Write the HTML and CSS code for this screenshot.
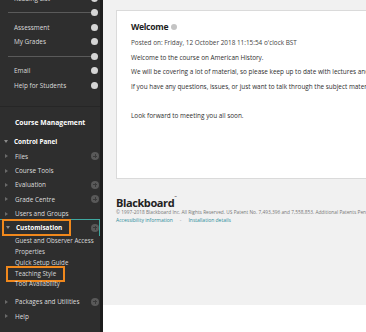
FILE: index.html
```html
<!DOCTYPE html>
<html>
<head lang="en">
    <meta charset="UTF-8">
    <title>Welcome</title>
    <link rel="stylesheet" href="styles.css">
</head>
<body>
<div id="page">
    <div id="side">
        <ul class="menu top">
            <li><span>Reading List</span><i class="dot"></i></li>
            <li class="line"><i class="dot"></i></li>
            <li><span>Assessment</span><i class="dot"></i></li>
            <li><span>My Grades</span><i class="dot"></i></li>
            <li class="line"><i class="dot"></i></li>
            <li><span>Email</span><i class="dot"></i></li>
            <li><span>Help for Students</span><i class="dot"></i></li>
        </ul>
        <div class="manage">
            <h3>Course Management</h3>
            <ul class="menu panel">
                <li class="head open"><b class="tri"></b><span>Control Panel</span></li>
                <li><b class="tri"></b><span>Files</span><i class="plus"></i></li>
                <li><b class="tri"></b><span>Course Tools</span></li>
                <li><b class="tri"></b><span>Evaluation</span><i class="plus"></i></li>
                <li><b class="tri"></b><span>Grade Centre</span><i class="plus"></i></li>
                <li><b class="tri"></b><span>Users and Groups</span></li>
                <li class="head open current"><em class="mark"><b class="tri"></b><span>Customisation</span></em><i class="plus"></i></li>
            </ul>
            <ul class="sub">
                <li>Guest and Observer Access</li>
                <li>Properties</li>
                <li>Quick Setup Guide</li>
                <li><em class="mark">Teaching Style</em></li>
                <li>Tool Availability</li>
            </ul>
            <ul class="menu panel">
                <li><b class="tri"></b><span>Packages and Utilities</span><i class="plus"></i></li>
                <li><b class="tri"></b><span>Help</span></li>
            </ul>
        </div>
    </div>
    <div id="main">
        <div class="content">
            <div class="card">
                <h2>Welcome <i class="info"></i></h2>
                <p class="posted">Posted on: Friday, 12 October 2018 11:15:54 o'clock BST</p>
                <p>Welcome to the course on American History.</p>
                <p>We will be covering a lot of material, so please keep up to date with lectures and seminars.</p>
                <p>If you have any questions, issues, or just want to talk through the subject material, please get in touch.</p>
                <p class="gap">Look forward to meeting you all soon.</p>
            </div>
            <div class="foot">
                <div class="logo">Blackboard<sup>&#8482;</sup></div>
                <p class="copy">&copy; 1997-2018 Blackboard Inc. All Rights Reserved. US Patent No. 7,493,396 and 7,558,853. Additional Patents Pending.</p>
                <p class="links"><a>Accessibility information</a><span>-</span><a>Installation details</a></p>
            </div>
        </div>
    </div>
</div>
</body>
</html>
```

FILE: styles.css
```css
*{
    margin: 0;
    padding: 0;
}
html, body{
    height: 100%;
    overflow: hidden;
    background: #ffffff;
}
body{
    font-family: "Open Sans", "Liberation Sans", sans-serif;
}
#page{
    display: flex;
    height: 332px;
}
#side{
    width: 100px;
    flex: none;
    background-color: #2e2e2e;
    border-right: 3px solid #1d1d1d;
    color: #e6e6e6;
    overflow: hidden;
}
.menu{
    list-style: none;
}
.menu li{
    height: 14.4px;
    display: flex;
    align-items: center;
    font-size: 6.4px;
    position: relative;
}
.menu.top li{
    height: 14.6px;
}
.menu.top{
    margin-top: -9.3px;
    padding-bottom: 13px;
    border-bottom: 1px solid #262626;
}
.menu.top li span{
    padding-left: 14px;
    flex: 1;
    color: #dcdcdc;
}
.menu .dot{
    width: 7px;
    height: 7px;
    border-radius: 50%;
    background-color: #d6d6d6;
    margin-right: 2px;
    margin-left: auto;
}
.menu li.line::before{
    content: "";
    flex: 1;
    height: 1px;
    margin-left: 8px;
    background-color: #5a5a5a;
}
.manage h3{
    font-size: 6.8px;
    font-weight: bold;
    color: #ffffff;
    padding: 11.5px 0 0 15px;
    height: 27.7px;
    box-sizing: border-box;
}
.panel li span{
    flex: 1;
    color: #dedede;
    white-space: nowrap;
}
.panel li.head span{
    font-weight: bold;
    color: #ffffff;
}
.tri{
    width: 0;
    height: 0;
    border-top: 2.5px solid transparent;
    border-bottom: 2.5px solid transparent;
    border-left: 3px solid #6a6a6a;
    margin: 0 7px 0 5px;
}
.open .tri{
    border-left: 2.5px solid transparent;
    border-right: 2.5px solid transparent;
    border-top: 3px solid #8a8a8a;
    border-bottom: 0;
    margin: 0 6px 0 4px;
}
.plus{
    width: 8px;
    height: 8px;
    border-radius: 50%;
    background-color: #595959;
    margin: 0 1px 0 auto;
    position: relative;
}
.plus::before, .plus::after{
    content: "";
    position: absolute;
    background-color: #3a3a3a;
    left: 2px;
    top: 3.5px;
    width: 4px;
    height: 1px;
}
.plus::after{
    left: 3.5px;
    top: 2px;
    width: 1px;
    height: 4px;
}
.panel li.current{
    height: 17px;
    margin-top: -1.5px;
    box-shadow: inset 0 1px 0 #3fa8a0, inset -1px 0 0 #3fa8a0;
}
.mark{
    font-style: normal;
    border: 2px solid #f0881c;
    display: flex;
    align-items: center;
    align-self: stretch;
    white-space: nowrap;
}
.current .mark{
    flex: none;
    width: 69px;
    margin-left: 2px;
    box-sizing: border-box;
}
.current .mark .tri{
    margin-left: 2px;
}
.sub{
    list-style: none;
    font-size: 6.2px;
    color: #dadada;
    padding: 0 0 4.6px 15px;
}
.sub li{
    height: 10.7px;
    line-height: 10.7px;
    white-space: nowrap;
}
.sub .mark{
    display: inline-block;
    margin-left: -9px;
    padding: 0 0 0 7px;
    box-sizing: border-box;
    height: 16px;
    line-height: 12px;
    vertical-align: top;
    margin-top: -2px;
    width: 59px;
}
#main{
    flex: 1;
    overflow: hidden;
}
.content{
    height: 305px;
    background-color: #f1f1f1;
    padding: 10px 0 0 13px;
    box-sizing: border-box;
}
.card{
    width: 320px;
    height: 169px;
    background-color: #ffffff;
    border: 1px solid #dadada;
    padding: 9px 0 0 14px;
    box-sizing: border-box;
    color: #2e2e2e;
}
.card h2{
    font-size: 8.6px;
    font-weight: bold;
    color: #1e1e1e;
    display: flex;
    align-items: center;
    gap: 3px;
    height: 13px;
    margin-bottom: 3px;
    letter-spacing: -0.3px;
}
.info{
    width: 6px;
    height: 6px;
    border-radius: 50%;
    background-color: #c4c4c4;
}
.card p{
    font-size: 6.4px;
    height: 14.5px;
    line-height: 14.5px;
    white-space: nowrap;
}
.card p.posted{
    color: #444444;
}
.card p.gap{
    margin-top: 15px;
}
.foot{
    margin-top: 10px;
}
.logo{
    font-size: 11px;
    font-weight: bold;
    color: #222222;
    letter-spacing: -0.4px;
    height: 16px;
    line-height: 16px;
}
.logo sup{
    font-size: 3px;
    vertical-align: 9px;
}
.copy{
    font-size: 4.8px;
    color: #777777;
    white-space: nowrap;
    height: 8px;
    line-height: 8px;
    margin-top: 3px;
}
.links{
    font-size: 5px;
    color: #2a8c99;
    white-space: nowrap;
    height: 8px;
    line-height: 8px;
}
.links span{
    margin: 0 7px;
    color: #999999;
}
```
